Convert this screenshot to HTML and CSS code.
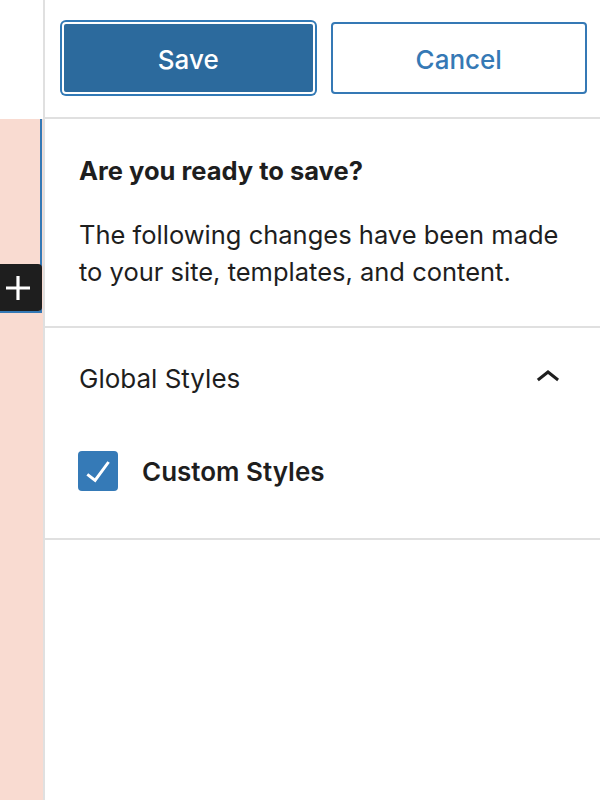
FILE: index.html
```html
<!DOCTYPE html>
<html lang="en">
<head>
<meta charset="utf-8">
<title>Save changes</title>
<link rel="stylesheet" href="styles.css">
</head>
<body>
<div class="app">
  <div class="canvas">
    <div class="canvas-top"></div>
    <div class="canvas-body">
      <div class="block">
        <button class="inserter" aria-label="Add block">
          <svg width="48" height="48" viewBox="0 0 24 24" aria-hidden="true"><path d="M18 11.2h-5.2V6h-1.6v5.2H6v1.6h5.2V18h1.6v-5.2H18z" fill="#fff"/></svg>
        </button>
      </div>
    </div>
  </div>
  <aside class="sidebar">
    <header class="actions">
      <button class="btn btn-primary">Save</button>
      <button class="btn btn-secondary">Cancel</button>
    </header>
    <section class="panel intro">
      <strong class="prompt-title">Are you ready to save?</strong>
      <p class="prompt-text">The following changes have been made to your site, templates, and content.</p>
    </section>
    <section class="panel group">
      <div class="group-toggle">
        <span class="group-title">Global Styles</span>
        <svg class="chevron" width="48" height="48" viewBox="0 0 24 24" aria-hidden="true"><path d="M6.5 12.4L12 8l5.5 4.4-.9 1.2L12 10l-4.6 3.6-1-1.2z" fill="#1e1e1e"/></svg>
      </div>
      <label class="check-row">
        <span class="checkbox">
          <svg width="48" height="48" viewBox="0 0 24 24" aria-hidden="true"><path d="M16.7 7.1l-6.3 8.5-3.3-2.5-.9 1.2 4.5 3.4L17.9 7.9z" fill="#fff"/></svg>
        </span>
        <span class="check-label">Custom Styles</span>
      </label>
    </section>
  </aside>
</div>
</body>
</html>
```

FILE: styles.css
```css
* { box-sizing: border-box; }
html, body { margin: 0; padding: 0; background: #fff; }
body {
  font-family: Inter, "Noto Sans", "Liberation Sans", sans-serif;
  color: #1e1e1e;
}
.app {
  display: flex;
  width: 600px;
  height: 800px;
  overflow: hidden;
}
.canvas {
  width: 43px;
  flex: none;
  display: flex;
  flex-direction: column;
}
.canvas-top {
  height: 119px;
  background: #fff;
}
.canvas-body {
  flex: 1;
  background: #f9dbd1;
}
.block {
  position: relative;
  width: 42px;
  height: 194px;
  border-right: 2px solid #3579b5;
  border-bottom: 2px solid #3579b5;
}
.inserter {
  position: absolute;
  right: -2px;
  bottom: 0;
  width: 42px;
  height: 47px;
  margin: 0;
  padding: 0 6px 0 0;
  border: 0;
  border-radius: 0 4px 4px 0;
  background: #1e1e1e;
  display: flex;
  align-items: center;
  justify-content: center;
}
.inserter svg { flex: none; }
.sidebar {
  flex: 1;
  border-left: 2px solid #e0e0e0;
  display: flex;
  flex-direction: column;
}
.actions {
  height: 119px;
  flex: none;
  border-bottom: 2px solid #e0e0e0;
  display: flex;
  align-items: center;
  gap: 16px;
  padding: 0 13px 1px 17px;
}
.btn {
  flex: 1;
  height: 72px;
  margin: 0;
  padding: 2px 0 0;
  border-radius: 4px;
  font-family: inherit;
  font-size: 26px;
  font-weight: 500;
  cursor: pointer;
}
.btn-primary {
  border: 0;
  background: #2c6a9d;
  color: #fff;
  box-shadow: inset 0 0 0 2px #fff, 0 0 0 2px #3179b6;
}
.btn-secondary {
  border: 2px solid #3579b5;
  background: #fff;
  color: #3579b5;
}
.panel {
  border-bottom: 2px solid #e0e0e0;
}
.intro {
  padding: 37px 32px 36px 34px;
}
.prompt-title {
  display: block;
  font-size: 25.5px;
  font-weight: 700;
  line-height: 30px;
}
.prompt-text {
  margin: 30px 0 0;
  font-size: 25.5px;
  line-height: 37px;
}
.group {
  padding: 0 0 47px 33px;
}
.group-toggle {
  height: 100px;
  display: flex;
  align-items: center;
  justify-content: space-between;
  padding-right: 28px;
}
.group-title {
  font-size: 26px;
  font-weight: 400;
  padding-left: 1px;
}
.check-row {
  margin-top: 23px;
  display: flex;
  align-items: center;
  gap: 24px;
}
.checkbox {
  width: 40px;
  height: 40px;
  border-radius: 4px;
  background: #357ab7;
  position: relative;
  overflow: hidden;
  flex: none;
}
.checkbox svg {
  position: absolute;
  left: -4px;
  top: -4px;
}
.check-label {
  font-size: 26px;
  font-weight: 600;
}
```
